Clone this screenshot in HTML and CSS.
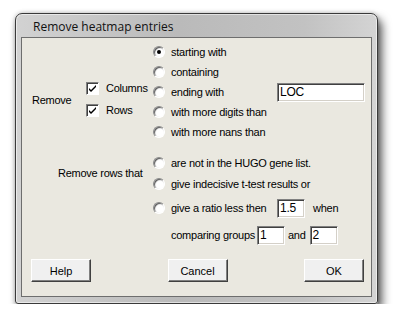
FILE: index.html
```html
<!DOCTYPE html>
<html lang="en">
<head>
    <meta charset="UTF-8">
    <title>Remove heatmap entries</title>
    <link rel="stylesheet" href="styles.css">
</head>
<body>
    <div class="window">
        <div class="titlebar">Remove heatmap entries</div>
        <div class="client">
            <div class="section-top">
                <div class="remove-label">Remove</div>
                <div class="checks">
                    <div class="check">
                        <span class="box"><svg width="9" height="9" viewBox="0 0 9 9"><path d="M1 4 L3 6 L8 1 L8 3 L3 8 L1 6 Z" fill="#000"/></svg></span>
                        <span>Columns</span>
                    </div>
                    <div class="check">
                        <span class="box"><svg width="9" height="9" viewBox="0 0 9 9"><path d="M1 4 L3 6 L8 1 L8 3 L3 8 L1 6 Z" fill="#000"/></svg></span>
                        <span>Rows</span>
                    </div>
                </div>
                <div class="options">
                    <div class="opt"><span class="radio on"></span><span class="opt-text">starting with</span></div>
                    <div class="opt"><span class="radio"></span><span class="opt-text">containing</span></div>
                    <div class="opt"><span class="radio"></span><span class="opt-text">ending with</span><span class="field wide">LOC</span></div>
                    <div class="opt"><span class="radio"></span><span class="opt-text">with more digits than</span></div>
                    <div class="opt"><span class="radio"></span><span class="opt-text">with more nans than</span></div>
                </div>
            </div>

            <div class="section-rows">
                <div class="rows-label">Remove rows that</div>
                <div class="options">
                    <div class="opt"><span class="radio"></span><span class="opt-text">are not in the HUGO gene list.</span></div>
                    <div class="opt second"><span class="radio"></span><span class="opt-text">give indecisive t-test results or</span></div>
                    <div class="opt ratio"><span class="radio"></span><span class="opt-text">give a ratio less then</span><span class="field small">1.5</span><span class="when">when</span></div>
                    <div class="opt groups"><span class="opt-text">comparing groups</span><span class="field small">1</span><span class="and">and</span><span class="field small">2</span></div>
                </div>
            </div>

            <div class="buttons">
                <button type="button">Help</button>
                <button type="button">Cancel</button>
                <button type="button">OK</button>
            </div>
        </div>
    </div>
</body>
</html>
```

FILE: styles.css
```css
body {
    margin: 0;
    background: #ffffff;
    font-family: "Liberation Sans", Arial, sans-serif;
    font-size: 11px;
    letter-spacing: -0.25px;
    color: #000000;
}

.window {
    width: 361px;
    height: 289px;
    margin: 13px 0 0 15px;
    border: 1px solid #3a3a3a;
    border-radius: 7px 7px 3px 3px;
    background: linear-gradient(to right, #d2d2d2, #bababa 45%, #c2c2c2 80%, #d4d4d4);
    box-shadow: inset 0 0 0 1px rgba(255, 255, 255, 0.55), 4px 6px 10px rgba(0, 0, 0, 0.65), 0 0 4px rgba(0, 0, 0, 0.25);
    display: flex;
    flex-direction: column;
}

.titlebar {
    height: 23px;
    padding-left: 17px;
    line-height: 25px;
    font-family: "Open Sans", "Liberation Sans", sans-serif;
    font-size: 12px;
    letter-spacing: 0;
    color: #111111;
}

.client {
    margin: 0 5px 6px 5px;
    flex: 1;
    border: 1px solid #6e6e6e;
    background: #eae8e0;
    display: flex;
    flex-direction: column;
}

.section-top {
    display: flex;
    padding-top: 4px;
}

.remove-label {
    width: 54px;
    padding: 51px 0 0 10px;
    line-height: 14px;
}

.checks {
    width: 67px;
    padding-top: 35px;
}

.check {
    height: 22px;
    display: flex;
    align-items: center;
    gap: 7px;
}

.box {
    width: 11px;
    height: 11px;
    background: #ffffff;
    border: 1px solid;
    border-color: #808080 #ffffff #ffffff #808080;
    box-shadow: inset 1px 1px #404040;
    display: flex;
    align-items: center;
    justify-content: center;
}

.options {
    display: flex;
    flex-direction: column;
}

.opt {
    height: 20px;
    display: flex;
    align-items: center;
}

.radio {
    width: 10px;
    height: 10px;
    margin-right: 6px;
    border: 1px solid;
    border-color: #8a8a8a #ffffff #ffffff #8a8a8a;
    border-radius: 50%;
    background: #ffffff;
    box-shadow: inset 1px 1px 1px #555555;
    position: relative;
}

.radio.on::after {
    content: "";
    position: absolute;
    left: 3px;
    top: 3px;
    width: 4px;
    height: 4px;
    border-radius: 50%;
    background: #000000;
}

.opt-text {
    min-width: 106px;
}

.field {
    height: 17px;
    padding-left: 2px;
    line-height: 17px;
    font-size: 12px;
    background: #ffffff;
    border: 1px solid;
    border-color: #808080 #ffffff #ffffff #808080;
    box-shadow: inset 1px 1px #404040, inset -1px -1px #d4d0c8;
}

.field.wide {
    width: 84px;
}

.field.small {
    width: 24px;
}

.section-rows {
    display: flex;
    margin-top: 11px;
}

.rows-label {
    width: 95px;
    padding: 13px 0 0 36px;
    line-height: 14px;
}

.opt.second {
    height: 21px;
}

.opt.ratio {
    height: 22px;
    margin-top: 3px;
}

.when {
    margin-left: 8px;
}

.opt.groups {
    height: 22px;
    margin-top: 5px;
    padding-left: 18px;
}

.groups .opt-text {
    min-width: 86px;
}

.and {
    margin: 0 4px 0 3px;
}

.buttons {
    display: flex;
    justify-content: space-between;
    padding: 13px 7px 0 9px;
}

button {
    width: 60px;
    height: 23px;
    padding: 0;
    font-family: "Liberation Sans", Arial, sans-serif;
    font-size: 11px;
    color: #000000;
    background: #f0f0f0;
    border: 1px solid;
    border-color: #ffffff #404040 #404040 #ffffff;
    box-shadow: inset -1px -1px #808080;
}
```
